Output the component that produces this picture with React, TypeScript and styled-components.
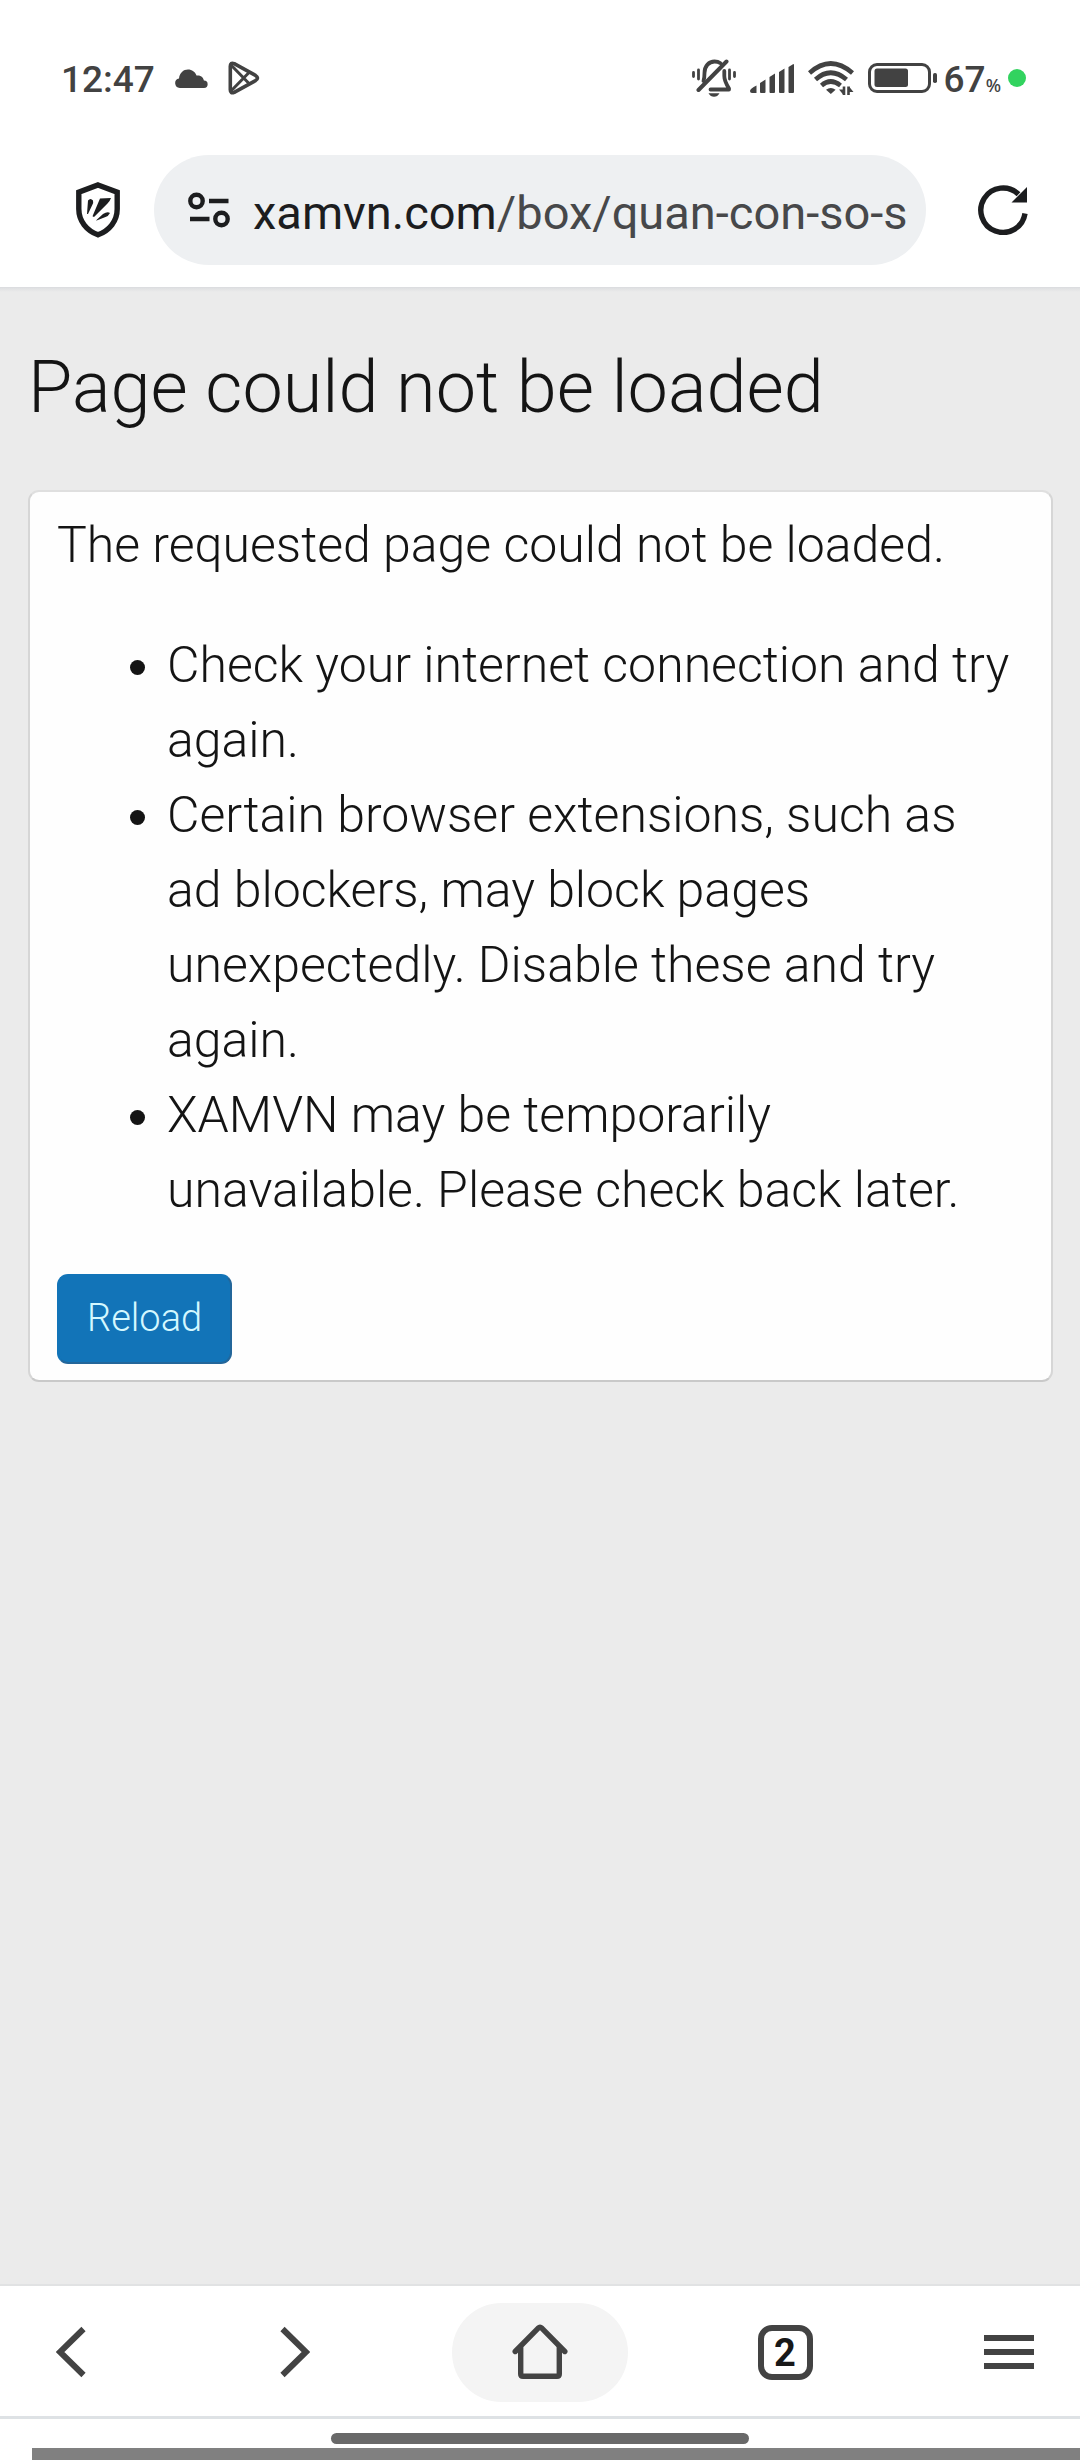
import React from "react";
import styled, { createGlobalStyle } from "styled-components";

const GlobalStyle = createGlobalStyle`
  *, *::before, *::after { box-sizing: border-box; }
  body {
    margin: 0;
    background: #ffffff;
    font-family: Roboto, "Liberation Sans", sans-serif;
  }
  button { margin: 0; padding: 0; border: 0; background: none; font: inherit; color: inherit; cursor: pointer; }
  svg { display: block; flex: none; }
`;

const Screen = styled.div`
  display: flex;
  flex-direction: column;
  min-height: 100vh;
`;

const StatusBar = styled.header`
  display: flex;
  align-items: center;
  justify-content: space-between;
  height: 155px;
  padding: 1px 54px 0 61px;
  color: #424242;
`;

const StatusGroup = styled.div<{ $gap: number }>`
  display: flex;
  align-items: center;
  gap: ${(p) => p.$gap}px;
`;

const StatusText = styled.span`
  padding-top: 3px;
  font-size: 37px;
  line-height: 44px;
  font-weight: 500;
`;

const Battery = styled.span`
  display: flex;
  align-items: baseline;
`;

const Percent = styled.span`
  font-family: "Noto Sans", Roboto, sans-serif;
  font-size: 18px;
  font-weight: 500;
`;

const Dot = styled.span`
  width: 18px;
  height: 18px;
  margin-left: -7px;
  border-radius: 50%;
  background: #32d35f;
`;

const AddressBar = styled.div`
  display: flex;
  align-items: center;
  gap: 34px;
  height: 132px;
  padding: 0 52px 22px 76px;
  color: #1c1d1f;
`;

const ToolButton = styled.button`
  display: flex;
  align-items: center;
  justify-content: center;
`;

const UrlPill = styled.button`
  display: flex;
  align-items: center;
  flex: 1;
  min-width: 0;
  height: 110px;
  gap: 23px;
  padding: 0 20px 0 34px;
  margin-right: 18px;
  border-radius: 55px;
  background: #eef0f2;
  text-align: left;
`;

const UrlText = styled.span`
  flex: 1;
  min-width: 0;
  overflow: hidden;
  padding-top: 6px;
  white-space: nowrap;
  font-size: 47px;
  line-height: 64px;
  color: #47484a;
`;

const Host = styled.span`
  color: #1c1d1f;
`;

const Page = styled.main`
  flex: 1;
  padding: 53px 27px 53px 28px;
  border-top: 1px solid #dcdde0;
  background: linear-gradient(#dfe0e2, #ebebeb 4px);
  color: #141414;
  font-weight: 300;
`;

const Title = styled.h1`
  margin: 0 0 55px;
  font-size: 72px;
  line-height: 94px;
  font-weight: 300;
`;

const Card = styled.section`
  padding: 16px 27px;
  border: 2px solid #d6d6d6;
  border-top-color: #dfdfdf;
  border-bottom-color: #c9c9c9;
  border-radius: 11px;
  background: #fefefe;
  font-size: 50px;
  line-height: 75px;
`;

const Message = styled.p`
  margin: 0;
`;

const Tips = styled.ul`
  margin: 45px 0 46px;
  padding: 0 8px 0 110px;
`;

const ReloadButton = styled.button`
  display: block;
  height: 90px;
  padding: 0 28px 2px;
  border: 2px solid #1274b8;
  border-right-color: #23669a;
  border-bottom-color: #23669a;
  border-radius: 11px;
  background: #1274b8;
  color: #d4f8ff;
  font-size: 38px;
  line-height: 50px;
  font-weight: 300;
`;

const NavBar = styled.nav`
  display: flex;
  align-items: center;
  justify-content: space-between;
  height: 132px;
  padding: 2px 4px 0 4px;
  border-top: 2px solid #e1e2e3;
  color: #434343;
`;

const NavButton = styled.button<{ $active?: boolean }>`
  display: flex;
  align-items: center;
  justify-content: center;
  width: ${(p) => (p.$active ? 176 : 134)}px;
  height: 99px;
  border-radius: 50px;
  background: ${(p) => (p.$active ? "#f4f4f4" : "transparent")};
`;

const TabCount = styled.span`
  display: flex;
  align-items: center;
  justify-content: center;
  width: 55px;
  height: 55px;
  padding-top: 2px;
  border: 6px solid #434343;
  border-radius: 14px;
  color: #181818;
  font-size: 38px;
  line-height: 44px;
  font-weight: 700;
`;

const GestureArea = styled.footer`
  display: flex;
  flex-direction: column;
  align-items: center;
  gap: 4px;
  padding-top: 14px;
  border-top: 3px solid #dee2e5;
`;

const GestureBar = styled.div`
  width: 418px;
  height: 11px;
  border-radius: 6px;
  background: #696969;
`;

const BottomStrip = styled.div`
  align-self: stretch;
  height: 12px;
  margin-left: 32px;
  background: #808080;
`;

const CloudIcon = () => (
  <svg width="33" height="19" viewBox="0 0 33 19" fill="currentColor" aria-hidden="true">
    <path d="M4.800 19a4.800 4.800 0 0 1-.8-9.500C4.500 4 8.500 .6 13 .6c4 0 7.200 2.400 8.500 6 3.500-.6 6.800 1.400 7.400 5A3.700 3.700 0 0 1 29 19z" />
  </svg>
);

const PlayIcon = () => (
  <svg width="32" height="34" viewBox="0 0 32 34" fill="none" stroke="currentColor" strokeWidth="3.6" strokeLinejoin="round" aria-hidden="true">
    <path d="M2.300 5.200Q2.300 1 6.200 2.700L27.500 14.400Q31.500 17 27.500 19.600L6.200 31.300Q2.300 33 2.300 28.800z" />
    <path d="M3.500 4.500L21.500 23M3.500 29.500L21.500 11" strokeWidth="3" />
  </svg>
);

const BellOffIcon = () => (
  <svg width="44" height="38" viewBox="0 0 44 38" fill="none" stroke="currentColor" strokeWidth="3.800" strokeLinecap="round" aria-hidden="true">
    <path d="M6.500 31L34.500 2.500" strokeWidth="4" />
    <path d="M11.500 22Q12.500 19 12.500 14C12.500 7 17 2.500 22.500 2.500Q26 2.500 28.500 4.200" />
    <path d="M32.300 12v5q0 5 4.700 12.500v1H18.500" strokeLinejoin="round" />
    <path d="M16.500 34.200h11q-2 3.600-5.500 3.600t-5.500-3.600z" fill="currentColor" stroke="none" />
    <path d="M1.500 13.500v4M6.500 11v9M37.500 11v9M42.500 13.500v4" strokeWidth="2.800" />
  </svg>
);

const SignalIcon = () => (
  <svg width="44" height="29" viewBox="0 0 44 29" fill="currentColor" aria-hidden="true">
    <path d="M0 27q0-2.500 6.500-5.500V29H2q-2 0-2-2z" />
    <path d="M10 19l5.500-3.500V28q0 1-1 1H11q-1 0-1-1zM19.500 13L25 9.500V28q0 1-1 1h-3.500q-1 0-1-1zM29 8l5.500-3.500V28q0 1-1 1H30q-1 0-1-1zM38.500 3L43 .2q1-.4 1 1V28q0 1-1 1h-3.500q-1 0-1-1z" />
  </svg>
);

const WifiIcon = () => (
  <svg width="46" height="34" viewBox="0 0 46 34" fill="none" stroke="currentColor" strokeWidth="4.600" aria-hidden="true">
    <path d="M1.500 12Q22.500-7 44.500 12M7.500 18.500Q22.500 5 38.500 18.500M13.500 24.500Q22.500 16.500 32.500 24.500" />
    <path d="M18 28.800q4.800-3.600 9.600 0L22.800 33z" fill="currentColor" stroke="none" />
    <path d="M36 25.500V34M40.500 25.500V34" strokeWidth="2.600" />
    <path d="M35.500 34l-4.500-5.500h4.500zM41 25.500l4.500 5.500H41z" fill="currentColor" stroke="none" />
  </svg>
);

const BatteryIcon = () => (
  <svg width="70" height="30" viewBox="0 0 70 30" fill="none" aria-hidden="true">
    <rect x="1.500" y="1.500" width="60" height="27" rx="7.500" stroke="currentColor" strokeWidth="3" />
    <rect x="6.500" y="5.500" width="33.500" height="18.500" rx="2.500" fill="currentColor" />
    <rect x="65" y="10" width="4" height="10" rx="1.800" fill="currentColor" />
  </svg>
);

const ShieldIcon = () => (
  <svg width="44" height="56" viewBox="0 0 44 56" fill="none" aria-hidden="true">
    <path d="M22 3L41.200 10.200V27C41.200 39 33.500 48.500 22 52.800C10.500 48.500 2.800 39 2.800 27V10.200z" stroke="currentColor" strokeWidth="5.400" />
    <path d="M12 18.500q2.500-3 5 0q.5 2-.5 4L12 32h-1zM24 16.500l11-.5q-1 3-3.500 5.500L18 35l-1.500-.8zM34 31q-1.500 3-4.500 4L20 38.800l1-1.300L27 32q4.500-3 7-1z" fill="currentColor" />
  </svg>
);

const TuneIcon = () => (
  <svg width="42" height="36" viewBox="0 0 42 36" fill="none" stroke="currentColor" strokeWidth="4.400" aria-hidden="true">
    <circle cx="8.500" cy="9" r="6.200" />
    <path d="M21 9h19.500M2 27h19.500" />
    <circle cx="33.500" cy="27" r="6.200" />
  </svg>
);

const RefreshIcon = () => (
  <svg width="50" height="50" viewBox="0 0 50 50" fill="none" aria-hidden="true">
    <path d="M47 28.500A22.200 22.200 0 1 1 40.500 9.300" stroke="currentColor" strokeWidth="5.400" />
    <path d="M49 2v15.500H33.500z" fill="currentColor" />
  </svg>
);

const Chevron = ({ forward = false }: { forward?: boolean }) => (
  <svg width="30" height="52" viewBox="0 0 30 52" fill="none" stroke="currentColor" strokeWidth="6" aria-hidden="true">
    <path d={forward ? "M2.500 3L26 26L2.500 49" : "M27.500 3L4 26L27.500 49"} />
  </svg>
);

const HomeIcon = () => (
  <svg width="56" height="56" viewBox="0 0 56 56" fill="none" stroke="currentColor" strokeWidth="5.400" strokeLinecap="round" strokeLinejoin="round" aria-hidden="true">
    <path d="M3.200 27.500L26 4.300Q28 2.500 30 4.300L52.800 27.500" />
    <path d="M8.700 24V50Q8.700 52.300 11 52.300H45Q47.300 52.300 47.300 50V24" />
  </svg>
);

const MenuIcon = () => (
  <svg width="50" height="34" viewBox="0 0 50 34" fill="currentColor" aria-hidden="true">
    <path d="M0 0h50v6H0zM0 14h50v6H0zM0 28h50v6H0z" />
  </svg>
);

const tips = [
  "Check your internet connection and try again.",
  "Certain browser extensions, such as ad blockers, may block pages unexpectedly. Disable these and try again.",
  "XAMVN may be temporarily unavailable. Please check back later.",
];

export default function App() {
  return (
    <Screen>
      <GlobalStyle />
      <StatusBar>
        <StatusGroup $gap={20}>
          <StatusText>12:47</StatusText>
          <CloudIcon />
          <PlayIcon />
        </StatusGroup>
        <StatusGroup $gap={14}>
          <BellOffIcon />
          <SignalIcon />
          <WifiIcon />
          <StatusGroup $gap={6}>
            <BatteryIcon />
            <Battery>
              <StatusText>67</StatusText>
              <Percent>%</Percent>
            </Battery>
          </StatusGroup>
          <Dot />
        </StatusGroup>
      </StatusBar>
      <AddressBar>
        <ToolButton type="button" aria-label="Protection">
          <ShieldIcon />
        </ToolButton>
        <UrlPill type="button">
          <TuneIcon />
          <UrlText>
            <Host>xamvn.com</Host>/box/quan-con-so-s
          </UrlText>
        </UrlPill>
        <ToolButton type="button" aria-label="Refresh">
          <RefreshIcon />
        </ToolButton>
      </AddressBar>
      <Page>
        <Title>Page could not be loaded</Title>
        <Card>
          <Message>The requested page could not be loaded.</Message>
          <Tips>
            {tips.map((tip) => (
              <li key={tip}>{tip}</li>
            ))}
          </Tips>
          <ReloadButton type="button">Reload</ReloadButton>
        </Card>
      </Page>
      <NavBar>
        <NavButton type="button" aria-label="Back">
          <Chevron />
        </NavButton>
        <NavButton type="button" aria-label="Forward">
          <Chevron forward />
        </NavButton>
        <NavButton type="button" aria-label="Home" $active>
          <HomeIcon />
        </NavButton>
        <NavButton type="button" aria-label="Tabs">
          <TabCount>2</TabCount>
        </NavButton>
        <NavButton type="button" aria-label="Menu">
          <MenuIcon />
        </NavButton>
      </NavBar>
      <GestureArea>
        <GestureBar />
        <BottomStrip />
      </GestureArea>
    </Screen>
  );
}
